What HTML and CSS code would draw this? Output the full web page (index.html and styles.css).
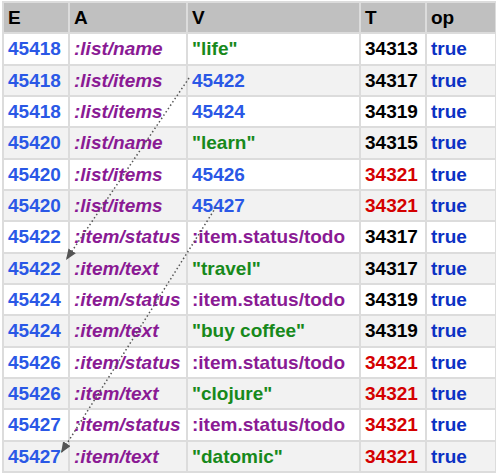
FILE: index.html
```html
<!DOCTYPE html>
<html>
<head>
<meta charset="utf-8">
<link rel="stylesheet" href="styles.css">
</head>
<body>
<div class="wrap">
<table class="datoms">
  <colgroup>
    <col class="c-e"><col class="c-a"><col class="c-v"><col class="c-t"><col class="c-op">
  </colgroup>
  <thead>
    <tr><th>E</th><th>A</th><th>V</th><th>T</th><th>op</th></tr>
  </thead>
  <tbody>
    <tr><td class="ent">45418</td><td class="attr">:list/name</td><td class="str">"life"</td><td class="tx">34313</td><td class="op">true</td></tr>
    <tr><td class="ent">45418</td><td class="attr">:list/items</td><td class="ent">45422</td><td class="tx">34317</td><td class="op">true</td></tr>
    <tr><td class="ent">45418</td><td class="attr">:list/items</td><td class="ent">45424</td><td class="tx">34319</td><td class="op">true</td></tr>
    <tr><td class="ent">45420</td><td class="attr">:list/name</td><td class="str">"learn"</td><td class="tx">34315</td><td class="op">true</td></tr>
    <tr><td class="ent">45420</td><td class="attr">:list/items</td><td class="ent">45426</td><td class="tx new">34321</td><td class="op">true</td></tr>
    <tr><td class="ent">45420</td><td class="attr">:list/items</td><td class="ent">45427</td><td class="tx new">34321</td><td class="op">true</td></tr>
    <tr><td class="ent">45422</td><td class="attr">:item/status</td><td class="kw">:item.status/todo</td><td class="tx">34317</td><td class="op">true</td></tr>
    <tr><td class="ent">45422</td><td class="attr">:item/text</td><td class="str">"travel"</td><td class="tx">34317</td><td class="op">true</td></tr>
    <tr><td class="ent">45424</td><td class="attr">:item/status</td><td class="kw">:item.status/todo</td><td class="tx">34319</td><td class="op">true</td></tr>
    <tr><td class="ent">45424</td><td class="attr">:item/text</td><td class="str">"buy coffee"</td><td class="tx">34319</td><td class="op">true</td></tr>
    <tr><td class="ent">45426</td><td class="attr">:item/status</td><td class="kw">:item.status/todo</td><td class="tx new">34321</td><td class="op">true</td></tr>
    <tr><td class="ent">45426</td><td class="attr">:item/text</td><td class="str">"clojure"</td><td class="tx new">34321</td><td class="op">true</td></tr>
    <tr><td class="ent">45427</td><td class="attr">:item/status</td><td class="kw">:item.status/todo</td><td class="tx new">34321</td><td class="op">true</td></tr>
    <tr><td class="ent">45427</td><td class="attr">:item/text</td><td class="str">"datomic"</td><td class="tx new">34321</td><td class="op">true</td></tr>
  </tbody>
</table>
<svg class="links" width="496" height="476" viewBox="0 0 496 476">
  <defs>
    <marker id="ah" viewBox="0 0 10 8" refX="10" refY="4" markerUnits="userSpaceOnUse" markerWidth="11" markerHeight="9" orient="auto">
      <path d="M0,0 L10,4 L0,8 Z" fill="#555"/>
    </marker>
  </defs>
  <line x1="189" y1="78" x2="66" y2="260" stroke="#555" stroke-width="1.5" stroke-dasharray="1.5 2.5" marker-end="url(#ah)"/>
  <line x1="216" y1="207" x2="61" y2="453" stroke="#555" stroke-width="1.5" stroke-dasharray="1.5 2.5" marker-end="url(#ah)"/>
</svg>
</div>
</body>
</html>
```
FILE: styles.css
```css
html, body {
  margin: 0;
  padding: 0;
  background: #ffffff;
}
.wrap {
  position: relative;
  width: 496px;
  height: 476px;
  padding: 1px 0 0 2px;
  box-sizing: border-box;
}
.datoms {
  border-collapse: collapse;
  font-family: "Liberation Sans", Arial, sans-serif;
  font-size: 19px;
  font-weight: bold;
  table-layout: fixed;
  width: 493px;
}
.c-e { width: 66px; }
.c-a { width: 118px; }
.c-v { width: 173px; }
.c-t { width: 66px; }
.c-op { width: 70px; }
.datoms th, .datoms td {
  border: 2px solid #dcdcdc;
  padding: 4px 4px;
  line-height: 21.33px;
  text-align: left;
  white-space: nowrap;
  overflow: hidden;
}
.datoms th {
  background: #c0c0c0;
  color: #000;
}
.datoms tbody tr:nth-child(even) td {
  background: #f2f2f2;
}
.ent { color: #2a58e6; }
.attr { color: #8a1a94; font-style: italic; }
.str { color: #17891b; }
.kw { color: #8a1a94; }
.tx { color: #000; }
.tx.new { color: #d40000; }
.op { color: #0b31c4; }
.links {
  position: absolute;
  left: 0;
  top: 0;
  pointer-events: none;
}
```
